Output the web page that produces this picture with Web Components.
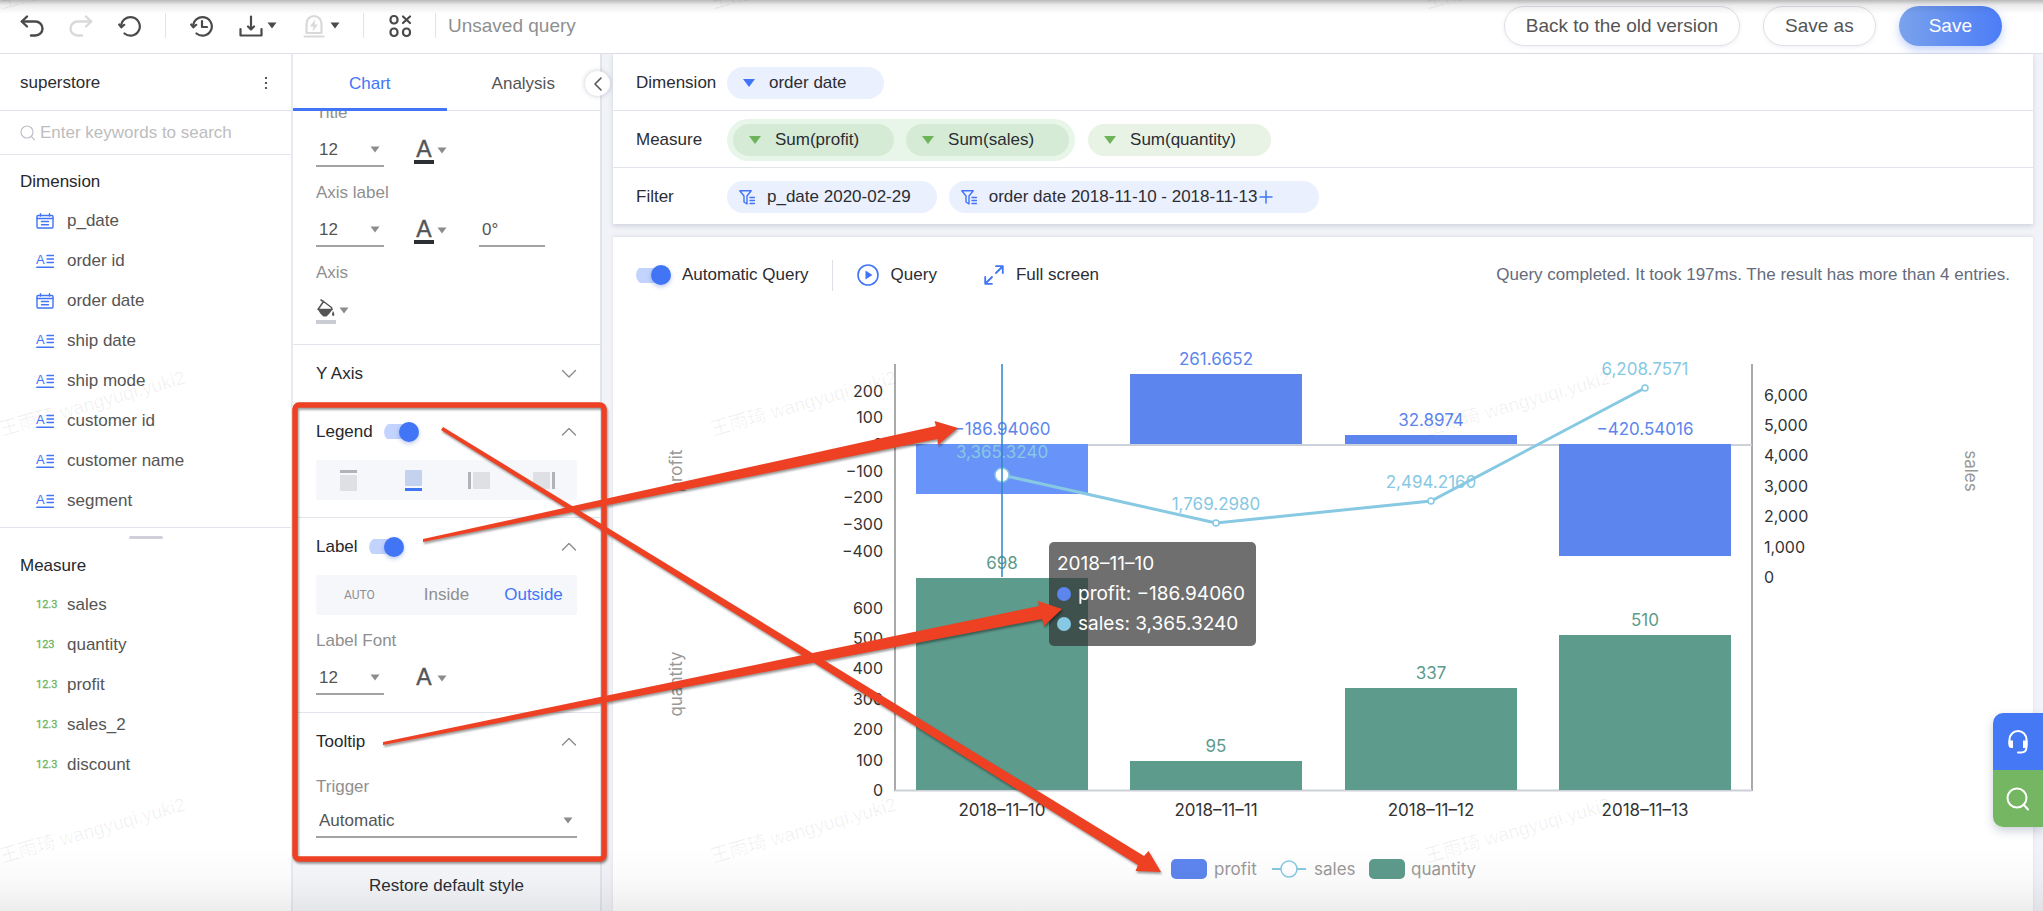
<!DOCTYPE html>
<html lang="en">
<head>
<meta charset="utf-8">
<title>Unsaved query</title>
<style>
  html, body { margin: 0; }
  body {
    font-family: "Liberation Sans", Arial, "Noto Sans CJK SC", sans-serif;
    font-size: 17px; line-height: 20px; color: #2b2d33; background: #f2f3f8;
  }
</style>
</head>
<body>
<query-editor></query-editor>
<script>
const define = (name, html, setup) => {
  const tpl = document.createElement('template');
  tpl.innerHTML = html;
  customElements.define(name, class extends HTMLElement {
    constructor() {
      super();
      this.attachShadow({ mode: 'open' }).append(tpl.content.cloneNode(true));
    }
    connectedCallback() { if (setup) setup(this, this.shadowRoot); }
  });
};

/* ---------- icons ---------- */
const s = (w, body) => `<g fill="none" stroke="currentColor" stroke-width="${w}" stroke-linecap="round" stroke-linejoin="round">${body}</g>`;
const ICONS = {
  undo: [24, 22, s(2.4, '<path d="M7 1.5 1.8 6.5 7 11.500"/><path d="M2 6.500H15.500a7 7 0 0 1 0 14H11"/>')],
  redo: [24, 22, s(2.4, '<path d="M17 1.500 22.200 6.500 17 11.500"/><path d="M22 6.500H8.500a7 7 0 0 0 0 14H13"/>')],
  reset: [24, 22, s(2.2, '<path d="M6.500 18.500A9.300 9.300 0 1 0 3.200 11.500"/><path d="M1.200 9.500 3.400 12.300 6.200 9.800"/>')],
  history: [24, 22, s(2.2, '<path d="M6.500 18.500A9.300 9.300 0 1 0 3.200 11.500"/><path d="M1.200 9.500 3.400 12.300 6.200 9.800"/><path d="M12 6V12H17"/>')],
  download: [24, 22, s(2.2, '<path d="M1.500 14V20.500H22.500V14"/><path d="M12 1.500V14"/><path d="M9 11.500 12 14.500 15 11.500"/>')],
  alert: [24, 24, s(2.2, '<path d="M4.500 19V10a7.500 8 0 0 1 15 0V19Z"/><path d="M2.500 22.500H21.500"/>') + '<path fill="currentColor" d="M13.500 5 8 12.500H11.500L10.500 17.500 16 10.500H12.500Z"/>'],
  grid: [24, 24, s(2.2, '<rect x="2.500" y="2" width="7" height="7.500" rx="3.200"/><rect x="2.500" y="14.500" width="7" height="7.500" rx="3.200"/><rect x="15" y="14.500" width="7" height="7.500" rx="3.200"/><path d="M15 2.500 22 9M22 2.500 15 9"/>')],
  search: [16, 16, s(1.2, '<circle cx="7" cy="7" r="6"/><path d="M11.300 11.300 14.500 14.800"/>')],
  more: [4, 16, '<g fill="currentColor"><circle cx="2" cy="3" r="1.100"/><circle cx="2" cy="8" r="1.100"/><circle cx="2" cy="13" r="1.100"/></g>'],
  date: [18, 16, s(1.4, '<rect x="1" y="2.500" width="16" height="12.500" rx="1"/><path d="M1 5.500H17M4.500 .8V3M13.500 .8V3M5.500 8.500H12.500M5.500 11.800H12.500"/>')],
  text: [18, 16, s(1.4, '<path d="M11 2.500H17.500M11 6H17.500M11 9.500H17.500M.8 14.200H17.500"/>') + '<text x="0" y="11" font-size="13" fill="currentColor">A</text>'],
  left: [10, 16, s(1.6, '<path d="M8 2 2 8 8 14"/>')],
  up: [16, 10, s(1.4, '<path d="M1.500 8 8 1.500 14.500 8"/>')],
  down: [16, 10, s(1.4, '<path d="M1.500 1.500 8 8 14.500 1.500"/>')],
  caret: [10, 7, '<path fill="currentColor" d="M.5.500H9.500L5 6.500Z"/>'],
  tri: [12, 8, '<path fill="currentColor" d="M0 0H12L6 8Z"/>'],
  bucket: [20, 18, '<path fill="currentColor" d="M2 10H16.500C15 13.500 12.500 15.500 10.500 17.500H7.500C5 16 3 13 2 10ZM17 12C18.500 14 19 17 17.200 17 15.500 17 16 14 17 12Z"/>' + s(1.5, '<path d="M5 1 7.500 2.500 15.500 8.500 16 10.500H2L7.500 2.500"/>')],
  filter: [16, 15, s(1.4, '<path d="M.8.800H12.200L8 6V14L5 12V6Z"/><path d="M11 7.500H15.500M11 10.500H15.500M11 13.500H15.500"/>')],
  plus: [14, 14, s(1.5, '<path d="M7 1V13M1 7H13"/>')],
  play: [22, 22, s(1.6, '<circle cx="11" cy="11" r="10"/>') + '<path fill="currentColor" d="M8.500 6.500 15.500 11 8.500 15.500Z"/>'],
  expand: [20, 20, s(1.8, '<path d="M12 1.200H18.800V8M18.500 1.500 12 8M8 18.800H1.200V12M1.500 18.500 8 12"/>')],
  headset: [22, 26, s(2, '<path d="M2.500 15V10.500a8.500 8.500 0 0 1 17 0V18q0 5.500-5.500 5.500H11"/>') + '<path fill="currentColor" d="M1.500 11.500H6V19H4.500Q1.500 19 1.500 16ZM20.500 11.500H16V19H18Q20.500 19 20.500 16Z"/>'],
  lens: [24, 24, s(2, '<circle cx="11" cy="11" r="9.500"/><path d="M17.500 17.500 22 22.500"/>')]
};
define('ui-icon', `<style>:host{display:inline-flex;flex:none}svg{display:block}</style><span></span>`, (el, root) => {
  const [w, h, body] = ICONS[el.getAttribute('name')];
  root.querySelector('span').innerHTML = `<svg width="${w}" height="${h}" viewBox="0 0 ${w} ${h}" aria-hidden="true">${body}</svg>`;
});

/* ---------- small controls ---------- */
define('tool-button', `<style>
  :host{display:inline-flex}
  button{all:unset;display:flex;align-items:center;gap:4px;color:#4a4a4a;cursor:pointer}
  :host([muted]) .main{color:#d9d9d9}
</style><button></button>`, (el, root) => {
  const b = root.querySelector('button');
  b.setAttribute('aria-label', el.getAttribute('label'));
  b.innerHTML = `<ui-icon class="main" name="${el.getAttribute('icon')}"></ui-icon>` + (el.hasAttribute('menu') ? '<ui-icon name="caret"></ui-icon>' : '');
});

define('pill-button', `<style>
  :host{display:inline-flex}
  button{font:inherit;font-size:19px;line-height:22px;height:40px;box-sizing:border-box;padding:0 21px;border-radius:20px;
    border:1px solid #dfe1ea;background:#fff;color:#555;box-shadow:0 1px 4px rgba(60,70,110,.08)}
  :host([primary]) button{border:0;padding:0 30px;color:#fff;background:linear-gradient(90deg,#7aa2ec,#4c7df7);box-shadow:0 4px 10px rgba(80,125,240,.35)}
</style><button><slot></slot></button>`);

define('toggle-switch', `<style>
  :host{display:inline-flex}
  label{display:flex;align-items:center;gap:11px}
  :host([reverse]) label{flex-direction:row-reverse}
  input{appearance:none;margin:0;width:35px;height:20px;position:relative;flex:none;
    background:linear-gradient(#c2d3fd,#c2d3fd) 0 50%/30px 15px no-repeat;border-radius:10px}
  input::before{content:"";position:absolute;right:0;top:0;width:20px;height:20px;border-radius:50%;
    background:#4175f6;box-shadow:0 2px 4px rgba(40,80,190,.3)}
</style><label><slot></slot><input type="checkbox" checked></label>`);

define('line-select', `<style>
  :host{display:grid;width:68px;height:34px;box-sizing:border-box;border-bottom:2px solid #a3a3a3;color:#555}
  :host([wide]){width:auto}
  select,ui-icon{grid-area:1/1}
  select{appearance:none;border:0;background:none;font:inherit;color:inherit;padding:2px 3px 0;margin:0;width:100%}
  ui-icon{justify-self:end;align-self:center;margin-right:4px;color:#8c8c8c;pointer-events:none}
</style><select></select><ui-icon name="caret"></ui-icon>`, (el, root) => {
  const sel = root.querySelector('select');
  sel.setAttribute('aria-label', el.getAttribute('label'));
  sel.innerHTML = `<option>${el.getAttribute('value')}</option>`;
});

define('colour-button', `<style>
  :host{display:inline-flex}
  button{all:unset;display:flex;align-items:center;gap:3px;color:#8c8c8c}
  .mark{display:flex;flex-direction:column;align-items:center;width:20px;color:#555}
  .glyph{font-size:23px;line-height:24px;height:23px;-webkit-text-stroke:.4px}
  .bar{width:20px;height:4px;background:var(--bar,#2b2e33)}
</style><button><span class="mark"><span class="glyph"><slot>A</slot></span><span class="bar"></span></span><ui-icon name="caret"></ui-icon></button>`,
(el, root) => root.querySelector('button').setAttribute('aria-label', el.getAttribute('label')));

define('segment-control', `<style>
  :host{display:block}
  fieldset{border:0;margin:0;padding:0;display:grid;grid-auto-flow:column;grid-auto-columns:1fr;height:40px;background:#f6f7fa;border-radius:3px}
  label{display:flex;align-items:center;justify-content:center;color:#8f8f8f}
  input{position:absolute;opacity:0;margin:0;pointer-events:none}
  label:has(:checked){color:#4175f6}
  small{font-size:12px;font-family:Roboto,"Liberation Sans",sans-serif}
  .pos{display:flex;gap:2px;align-items:center;--line:#b2b3ba;--box:#dfe0e3}
  label:has(:checked) .pos{--line:#4175f6;--box:#c4d1ef}
  .pos i{display:block;background:var(--line);width:17px;height:3px}
  .pos b{display:block;background:var(--box);width:17px;height:16px;border-radius:1px}
  .top{flex-direction:column}.bottom{flex-direction:column-reverse}.right{flex-direction:row-reverse}
  .left i,.right i{width:3px;height:17px}.left b,.right b{height:17px}
</style><fieldset></fieldset>`, (el, root) => {
  const fs = root.querySelector('fieldset'), picked = el.getAttribute('value');
  fs.setAttribute('aria-label', el.getAttribute('label'));
  fs.innerHTML = el.getAttribute('options').split(',').map(o => {
    const body = el.hasAttribute('position') ? `<span class="pos ${o}"><i></i><b></b></span>` : o === 'AUTO' ? `<small>${o}</small>` : `<span>${o}</span>`;
    return `<label><input type="radio" name="seg" aria-label="${o}" ${o === picked ? 'checked' : ''}>${body}</label>`;
  }).join('');
});

define('panel-section', `<style>
  :host{display:block;padding:0 23px 17px;border-bottom:1px solid #e2e4ec}
  :host([collapsed]){padding-bottom:0}
  :host([last]){border:0;padding-bottom:22px}
  header{display:flex;align-items:center;justify-content:space-between;height:57px;color:#26282d}
  .fold{display:flex;color:#8c8c8c}
</style><header><slot name="head"></slot><span class="fold"></span></header><slot></slot>`, (el, root) => {
  root.querySelector('.fold').innerHTML = `<ui-icon name="${el.hasAttribute('collapsed') ? 'down' : 'up'}"></ui-icon>`;
});

/* ---------- top bar ---------- */
define('top-bar', `<style>
  :host{display:flex;align-items:center;height:54px;box-sizing:border-box;border-bottom:1px solid #dfe1ea;padding:0 41px 2px 20px;background:#fff}
  nav{display:flex;align-items:center}
  hr{border:0;width:1px;height:25px;margin:0 24px 0 23px;background:#dbe3f8}
  .a{gap:25px}
  h1{font-size:19px;font-weight:400;line-height:22px;margin:0;color:#8f8f8f}
  hr.end{margin-right:12px}
  .actions{margin-left:auto;gap:23px}
</style>
<nav class="a"><tool-button icon="undo" label="Undo"></tool-button><tool-button icon="redo" label="Redo" muted></tool-button><tool-button icon="reset" label="Reset"></tool-button></nav>
<hr><nav class="a"><tool-button icon="history" label="History"></tool-button><tool-button icon="download" label="Download" menu></tool-button><tool-button icon="alert" label="Alert" menu muted></tool-button></nav>
<hr><nav><tool-button icon="grid" label="Chart type"></tool-button></nav>
<hr class="end"><h1>Unsaved query</h1>
<nav class="actions"><pill-button>Back to the old version</pill-button><pill-button>Save as</pill-button><pill-button primary>Save</pill-button></nav>`);

/* ---------- data set fields ---------- */
define('field-item', `<style>
  :host{display:flex;align-items:center;height:40px;padding-left:36px;color:#555}
  .kind{width:31px;display:flex;color:#4175f6}
  .num{color:#6db35a;font-family:Roboto,"Liberation Sans",sans-serif;font-size:11px;line-height:14px;-webkit-text-stroke:.3px}
</style><span class="kind"></span><slot></slot>`, (el, root) => {
  const k = el.getAttribute('kind');
  root.querySelector('.kind').innerHTML = /\d/.test(k) ? `<span class="num">${k}</span>` : `<ui-icon name="${k}"></ui-icon>`;
});

define('field-panel', `<style>
  :host{display:block;background:#fff;border-right:2px solid #e8eaf2;min-width:0}
  .name{display:flex;align-items:center;justify-content:space-between;height:57px;box-sizing:border-box;padding:2px 23px 0 20px;border-bottom:1px solid #e2e4ec}
  .name button{all:unset;display:flex}
  .search{display:flex;align-items:center;gap:4px;height:43px;padding-left:20px;border-bottom:1px solid #e2e4ec;color:#bfc1c9}
  input{flex:1;min-width:0;border:0;outline:0;background:none;padding:0;font:inherit}
  input::placeholder{color:#bdbdbd;opacity:1}
  h2{font:inherit;margin:0;padding:17px 20px 9px;color:#26282d}
  .split{border-top:1px solid #e2e4ec;margin-top:6px;padding-top:8px}
  .split::before{content:"";display:block;width:34px;height:3px;border-radius:2px;background:#cfd0da;margin:0 auto}
</style>
<div class="name"><span>superstore</span><button aria-label="More"><ui-icon name="more"></ui-icon></button></div>
<label class="search"><ui-icon name="search"></ui-icon><input type="text" placeholder="Enter keywords to search" aria-label="Search fields"></label>
<h2>Dimension</h2>
<field-item kind="date">p_date</field-item><field-item kind="text">order id</field-item><field-item kind="date">order date</field-item>
<field-item kind="text">ship date</field-item><field-item kind="text">ship mode</field-item><field-item kind="text">customer id</field-item>
<field-item kind="text">customer name</field-item><field-item kind="text">segment</field-item>
<div class="split"></div>
<h2>Measure</h2>
<field-item kind="12.3">sales</field-item><field-item kind="123">quantity</field-item><field-item kind="12.3">profit</field-item>
<field-item kind="12.3">sales_2</field-item><field-item kind="12.3">discount</field-item>`);

/* ---------- chart style panel ---------- */
define('style-panel', `<style>
  :host{display:flex;flex-direction:column;background:#fff;border-right:2px solid #e2e4ec;min-width:0;position:relative}
  .tabs{display:grid;grid-template-columns:1fr 1fr;height:56px;border-bottom:1px solid #e2e4ec}
  .tabs button{all:unset;text-align:center;padding-top:4px;color:#555}
  .tabs button[aria-selected=true]{color:#4175f6;box-shadow:inset 0 -2px #4175f6,0 1px #4175f6}
  .fold{all:unset;position:absolute;right:-10px;top:17px;width:25px;height:25px;border-radius:50%;background:#fff;
    box-shadow:0 0 5px rgba(60,70,110,.3);display:flex;align-items:center;justify-content:center;color:#555;z-index:1}
  .body{overflow:hidden}
  .group{display:grid;gap:10px;padding:0 23px;margin-top:16px}
  .group:first-child{margin-top:-8px}
  .in{padding:0}
  .label{color:#8f8f8f}
  .row{display:flex;align-items:center;height:34px}
  .row colour-button{margin-left:30px}
  .row colour-button:first-child{margin-left:0}
  .angle{margin-left:32px;width:66px;height:34px;box-sizing:border-box;border:0;border-bottom:2px solid #a3a3a3;padding:2px 3px 0;font:inherit;color:#555;background:none}
  .end{border-bottom:1px solid #e2e4ec;padding-bottom:17px}
  .tight{gap:7px;margin-top:7px}
  footer{flex:1;background:#f6f7fa;display:flex;justify-content:center;align-items:center}
  footer button{all:unset}
</style>
<div class="tabs" role="tablist"><button role="tab" aria-selected="true">Chart</button><button role="tab" aria-selected="false">Analysis</button></div>
<button class="fold" aria-label="Collapse panel"><ui-icon name="left"></ui-icon></button>
<div class="body">
  <div class="group"><span class="label">Title</span><div class="row"><line-select label="Title size" value="12"></line-select><colour-button label="Title colour"></colour-button></div></div>
  <div class="group"><span class="label">Axis label</span><div class="row"><line-select label="Axis label size" value="12"></line-select><colour-button label="Axis label colour"></colour-button><input class="angle" aria-label="Axis label angle" value="0°"></div></div>
  <div class="group end"><span class="label">Axis</span><div class="row"><colour-button label="Axis colour" style="--bar:#c9ccd3"><ui-icon name="bucket"></ui-icon></colour-button></div></div>
  <panel-section collapsed><span slot="head">Y Axis</span></panel-section>
  <panel-section><toggle-switch slot="head">Legend</toggle-switch><segment-control position label="Legend position" options="top,bottom,left,right" value="bottom"></segment-control></panel-section>
  <panel-section><toggle-switch slot="head">Label</toggle-switch><segment-control label="Label position" options="AUTO,Inside,Outside" value="Outside"></segment-control>
    <div class="group in"><span class="label">Label Font</span><div class="row"><line-select label="Label size" value="12"></line-select><colour-button label="Label colour" style="--bar:transparent"></colour-button></div></div></panel-section>
  <panel-section last><span slot="head">Tooltip</span><div class="group in tight"><span class="label">Trigger</span><line-select wide label="Trigger" value="Automatic"></line-select></div></panel-section>
</div>
<footer><button>Restore default style</button></footer>`);

/* ---------- query shelf ---------- */
define('field-chip', `<style>
  :host{display:inline-flex;align-items:center;height:32px;border-radius:16px;padding:0 35px 0 16px;gap:14px;background:#eaf0fe;white-space:nowrap}
  .ico{display:flex;color:#4175f6}
  :host([measure]) .ico{color:#6db35a}
  :host([measure]){background:#e8f3e6;padding-right:33px}
  :host([joined]){background:#d6ebd5}
  :host([filter]){padding:0 24px 0 12px;gap:12px}
  :host([more]){padding-right:46px}
  .txt{display:flex;align-items:center;gap:2px}
</style><span class="ico lead"></span><span class="txt"><slot></slot><span class="ico tail"></span></span>`, (el, root) => {
  root.querySelector('.lead').innerHTML = `<ui-icon name="${el.hasAttribute('filter') ? 'filter' : 'tri'}"></ui-icon>`;
  if (el.hasAttribute('more')) root.querySelector('.tail').innerHTML = '<ui-icon name="plus"></ui-icon>';
});

define('query-shelf', `<style>
  :host{display:block;background:#fff;box-shadow:0 2px 5px rgba(60,70,110,.2)}
  .row{display:flex;align-items:center;height:57px;box-sizing:border-box;padding:2px 0 0 23px;border-bottom:1px solid #e2e4ec}
  .row:last-child{border:0;height:56px}
  .row>span{width:91px;flex:none}
  .group{display:flex;gap:12px;padding:5px 6px;border-radius:21px;background:#e8f6ea;margin-right:13px}
  .filters{display:flex;gap:12px}
</style>
<div class="row"><span>Dimension</span><field-chip>order date</field-chip></div>
<div class="row"><span>Measure</span><div class="group"><field-chip measure joined>Sum(profit)</field-chip><field-chip measure joined>Sum(sales)</field-chip></div><field-chip measure>Sum(quantity)</field-chip></div>
<div class="row"><span>Filter</span><div class="filters"><field-chip filter>p_date 2020-02-29</field-chip><field-chip filter more>order date 2018-11-10 - 2018-11-13</field-chip></div></div>`);

define('result-bar', `<style>
  :host{display:flex;align-items:center;height:76px;padding:0 23px}
  button{all:unset;display:flex;align-items:center;gap:12px;color:#4175f6}
  button span{color:#2b2d33}
  hr{border:0;width:1px;height:31px;margin:0 24px 0 23px;background:#dcdfe8}
  .full{margin-left:47px}
  p{margin:0 0 0 auto;color:#646b7b}
</style>
<toggle-switch reverse>Automatic Query</toggle-switch><hr>
<button><ui-icon name="play"></ui-icon><span>Query</span></button>
<button class="full"><ui-icon name="expand"></ui-icon><span>Full screen</span></button>
<p>Query completed. It took 197ms. The result has more than 4 entries.</p>`);

/* ---------- chart ---------- */
define('result-chart', `<style>
  :host{display:block;font-family:Inter,"Liberation Sans",sans-serif;font-size:17px}
  svg{display:block;width:100%;height:auto}
  .tick{fill:#333}.value{font-size:16px}.name{fill:#999;text-anchor:middle}
  .mid{text-anchor:middle}.end{text-anchor:end}
  .profit{fill:#5d85ee}.sales{fill:#87c8e3}.quantity{fill:#5d9b8c}.key{fill:#999}
  .line{fill:none;stroke:#87c8e3}
  .tip{fill:#fff;font-size:19px}
</style><div></div>`, (el, root) => {
  const days = [
    { d: '2018–11–10', p: -186.9406, pl: '−186.94060', s: 3365.324, sl: '3,365.3240', q: 698 },
    { d: '2018–11–11', p: 261.6652, pl: '261.6652', s: 1769.298, sl: '1,769.2980', q: 95 },
    { d: '2018–11–12', p: 32.8974, pl: '32.8974', s: 2494.216, sl: '2,494.2160', q: 337 },
    { d: '2018–11–13', p: -420.54016, pl: '−420.54016', s: 6208.7571, sl: '6,208.7571', q: 510 }
  ];
  const L = 282, R = 1139, Z = 131, band = (R - L) / 4, bw = 172, r = Math.round;
  const cx = i => r(L + band * (i + .5));
  const yp = v => r(Z - v * .267), ys = v => r(264 - v * .0304), yq = v => r(477 - v * .304);
  const t = (x, y, c, txt) => `<text x="${x}" y="${y + 6}" class="${c}">${txt}</text>`;
  let g = '';
  g += `<path d="M${L} 51V478M${R} 51V478" stroke="#8f8f8f" stroke-width="1.500"/>`;
  for (const v of [200, 100, 0, -100, -200, -300, -400]) g += t(270, yp(v), 'tick value end', String(v).replace('-', '−'));
  for (let v = 0; v <= 6000; v += 1000) g += t(1151, ys(v), 'tick value', v.toLocaleString('en-US'));
  for (let v = 0; v <= 600; v += 100) g += t(270, yq(v), 'tick value end', v);
  g += `<path d="M${L} ${Z + 1}H${R}M${L} 477.500H${R}" stroke="#ccd0d8" stroke-width="2"/>`;
  days.forEach((o, i) => {
    const x = cx(i) - bw / 2, a = Math.min(yp(o.p), Z), b = Math.max(yp(o.p), Z);
    g += `<rect class="profit" x="${x}" y="${a}" width="${bw}" height="${b - a}" ${i ? '' : 'style="fill:#6893f8"'}/>`;
    g += `<rect class="quantity" x="${x}" y="${yq(o.q)}" width="${bw}" height="${477 - yq(o.q)}"/>`;
    g += t(cx(i), yq(o.q) - 15, 'quantity mid', o.q) + t(cx(i), 497, 'tick mid', o.d);
  });
  g += `<polyline class="line" stroke-width="3" points="${days.map((o, i) => cx(i) + ',' + ys(o.s)).join(' ')}"/>`;
  days.forEach((o, i) => {
    g += t(cx(i), Math.min(yp(o.p), Z) - 15, 'profit mid', o.pl) + t(cx(i), ys(o.s) - (i ? 19 : 23), 'sales mid', o.sl);
    if (i) g += `<circle cx="${cx(i)}" cy="${ys(o.s)}" r="3" fill="#fff" stroke="#87c8e3" stroke-width="1.500"/>`;
  });
  g += `<circle cx="${cx(0)}" cy="${ys(days[0].s)}" r="7" fill="#fff" stroke="#87c8e3" stroke-width="1.500"/>`;
  g += `<path d="M${cx(0)} 51V264" stroke="#2f86c9" stroke-width="1.500"/>`;
  g += `<text class="name" transform="translate(69 158) rotate(-90)">profit</text><text class="name" transform="translate(69 371) rotate(-90)">quantity</text><text class="name" transform="translate(1352 158) rotate(90)">sales</text>`;
  g += `<rect x="436" y="229" width="207" height="104" rx="5" fill="#323232" fill-opacity=".7"/>`;
  g += t(444, 251, 'tip', '2018–11–10') + t(465, 281, 'tip', 'profit: −186.94060') + t(465, 311, 'tip', 'sales: 3,365.3240');
  g += `<circle class="profit" cx="451" cy="281" r="7"/><circle class="sales" cx="451" cy="311" r="7"/>`;
  g += `<rect class="profit" x="558" y="546" width="36" height="20" rx="5"/>` + t(601, 556, 'key', 'profit');
  g += `<path class="line" stroke-width="2" d="M659 556H668M684 556H693"/><circle class="line" stroke-width="1.500" cx="676" cy="556" r="8"/>` + t(701, 556, 'key', 'sales');
  g += `<rect class="quantity" x="756" y="546" width="36" height="20" rx="5"/>` + t(798, 556, 'key', 'quantity');
  root.querySelector('div').innerHTML = `<svg viewBox="0 0 1420 598" role="img" aria-label="Profit, sales and quantity by order date">${g}</svg>`;
});

/* ---------- floating help buttons ---------- */
define('help-dock', `<style>
  :host{position:absolute;right:0;top:713px;width:50px;border-radius:10px 0 0 10px;overflow:hidden;box-shadow:0 4px 10px rgba(60,70,110,.25)}
  button{all:unset;display:flex;align-items:center;justify-content:center;width:100%;height:57px;color:#fff;background:#4478f5}
  button+button{background:#75b662}
</style><button aria-label="Support"><ui-icon name="headset"></ui-icon></button><button aria-label="Search help"><ui-icon name="lens"></ui-icon></button>`);

/* ---------- hand-drawn notes and watermark over the page ---------- */
define('page-notes', `<style>
  :host{position:absolute;inset:0;pointer-events:none;overflow:hidden;
    background:linear-gradient(rgba(0,0,0,.28),rgba(0,0,0,.08) 5px,transparent 14px) top/100% 14px no-repeat,
      linear-gradient(transparent,rgba(0,0,0,.02) 50%,rgba(0,0,0,.07)) bottom/100% 64px no-repeat}
  svg{display:block;width:100%;height:auto}
  .wm{font-size:19px;fill:#000;fill-opacity:.06}
  .note{filter:drop-shadow(1px 2px 1px rgba(0,0,0,.4))}
</style><svg viewBox="0 0 2043 911"></svg>`, (el, root) => {
  let g = '';
  for (const y of [9, 436, 863]) for (const x of [2, 713, 1427])
    g += `<text class="wm" transform="translate(${x} ${y}) rotate(-16)">王雨琦 wangyuqi.yuki2</text>`;
  g += `<g class="note" fill="#ee4123">
    <rect x="295" y="405" width="309" height="454" rx="4" fill="none" stroke="#ee4123" stroke-width="5.500"/>
    <path d="M423 539 936 426 934.500 421 958 428 938 445 937.500 439 423 542Z"/>
    <path d="M383 742 1039 606 1038 601 1062 609 1044 626 1042 619 383 745Z"/>
    <path d="M443 427 1144 856 1148.500 851 1161 872 1135.500 871 1138 865 441 430Z"/></g>`;
  root.querySelector('svg').innerHTML = g;
});

define('query-editor', `<style>
  :host{display:flex;flex-direction:column;min-height:100vh;position:relative}
  main{flex:1;display:grid;grid-template-columns:293px 309px minmax(0,1fr)}
  .work{display:flex;flex-direction:column;gap:13px;padding:0 10px 0 11px}
  .result{flex:1;background:#fff;box-shadow:0 -1px 3px rgba(60,70,110,.12)}
</style>
<top-bar></top-bar>
<main><field-panel></field-panel><style-panel></style-panel>
<div class="work"><query-shelf></query-shelf><section class="result"><result-bar></result-bar><result-chart></result-chart></section></div></main>
<help-dock></help-dock><page-notes></page-notes>`);
</script>
</body>
</html>
